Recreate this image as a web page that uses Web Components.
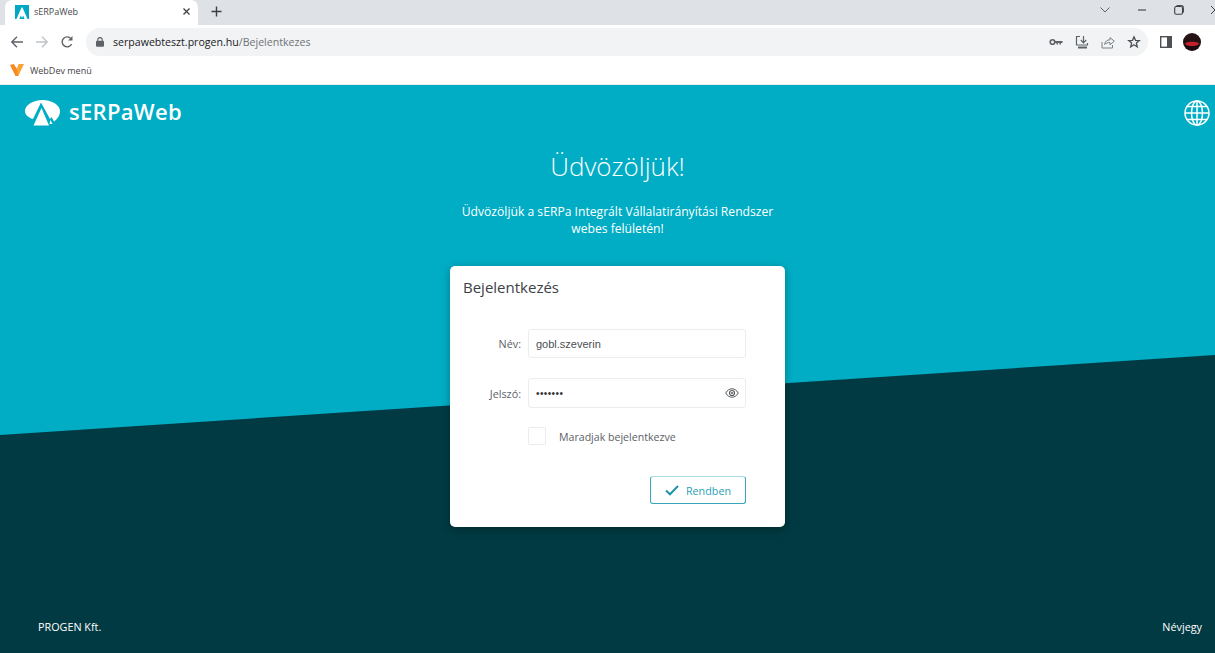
<!DOCTYPE html>
<html lang="hu">
<head>
<meta charset="utf-8">
<title>sERPaWeb</title>
<style>
  html, body { margin: 0; height: 100%; overflow: hidden; }
  body { display: flex; flex-direction: column; font-family: "Open Sans", "Noto Sans", sans-serif; }
</style>
</head>
<body>
<browser-chrome></browser-chrome>
<login-page>
  <page-header slot="header"></page-header>
  <welcome-text slot="welcome"></welcome-text>
  <login-card slot="card"></login-card>
  <span slot="footer-left">PROGEN Kft.</span>
  <span slot="footer-right">Névjegy</span>
</login-page>

<script>
class BaseComponent extends HTMLElement {
  constructor() {
    super();
    this.attachShadow({ mode: 'open' });
  }

  connectedCallback() {
    this.render();
  }

  render(template) {
    this.shadowRoot.innerHTML = template;
  }
}

class BrowserChrome extends BaseComponent {
  render() {
    super.render(`
      <style>
        :host { display: block; height: 85px; flex: none; background: #fff; color: #3c4043; }
        svg { display: block; flex: none; }
        .tabs { display: flex; align-items: flex-end; height: 25px; background: #dee1e6; padding-left: 5px; }
        .tab { display: flex; align-items: center; width: 193px; height: 25px; box-sizing: border-box; padding: 0 7px 2px 10px; background: #fff; border-radius: 7px 7px 0 0; font-size: 9px; }
        .tab span { flex: 1; margin-left: 5px; color: #45494d; }
        .plus { margin: 0 0 8px 13px; }
        .window { display: flex; align-items: center; margin-left: auto; height: 25px; margin-right: -5px; padding-bottom: 5px; box-sizing: border-box; }
        .window svg:nth-child(2) { margin-left: 27px; }
        .window svg:nth-child(3) { margin-left: 27px; }
        .window svg:nth-child(4) { margin-left: 26px; }
        .toolbar { display: flex; align-items: center; height: 34px; padding-left: 10px; }
        .nav { display: flex; gap: 11px; margin-right: 12px; }
        .omni { display: flex; align-items: center; width: 1062px; height: 28px; box-sizing: border-box; padding: 0 7px 0 10px; background: #f1f3f4; border-radius: 14px; font-size: 10.600px; }
        .url { margin-left: 9px; flex: 1; color: #202124; }
        .url i { font-style: normal; color: #6f7378; }
        .omni-icons { display: flex; gap: 12px; }
        .side { margin-left: 12px; }
        .avatar { margin-left: 11px; width: 18px; height: 18px; border-radius: 50%; background: radial-gradient(ellipse 8px 2.500px at 50% 60%, #c2202c 70%, transparent 100%), linear-gradient(#2a1518, #17090b); }
        .bookmarks { display: flex; align-items: center; gap: 6px; height: 26px; box-sizing: border-box; padding: 0 0 3px 10px; font-size: 9px; border-bottom: 1px solid #e8eaed; color: #3f4347; }
      </style>
      <div class="tabs">
        <div class="tab">
          <svg width="14" height="14" viewBox="0 0 14 14"><rect width="14" height="14" fill="#00a9c3"/><path d="M1.500 14 6.500 2.500h1L12.500 14H9.600L8.200 10.500 7 13 5.800 10.500 4.400 14z" fill="#fff"/></svg>
          <span>sERPaWeb</span>
          <svg width="9" height="9" viewBox="0 0 9 9"><path d="M1.500 1.500l6 6M7.500 1.500l-6 6" stroke="#3c4043" stroke-width="1.300"/></svg>
        </div>
        <svg class="plus" width="11" height="11" viewBox="0 0 11 11"><path d="M5.500.5v10M.5 5.500h10" stroke="#3c4043" stroke-width="1.400"/></svg>
        <div class="window">
          <svg width="10" height="6" viewBox="0 0 10 6"><path d="M.5.5 5 5 9.500.5" fill="none" stroke="#5f6368"/></svg>
          <svg width="10" height="10" viewBox="0 0 10 10"><path d="M1 5h8" stroke="#3c4043" stroke-width="1.100"/></svg>
          <svg width="10" height="10" viewBox="0 0 10 10"><rect x=".7" y="1.500" width="7.800" height="7.800" rx="1.500" fill="none" stroke="#3c4043" stroke-width="1.100"/><path d="M2.500.6h5.200a1.600 1.600 0 0 1 1.700 1.700v5.200" fill="none" stroke="#3c4043"/></svg>
          <svg width="10" height="10" viewBox="0 0 10 10"><path d="M1 1l8 8M9 1 1 9" stroke="#3c4043"/></svg>
        </div>
      </div>
      <div class="toolbar">
        <div class="nav">
          <svg width="14" height="14" viewBox="0 0 14 14"><path d="M13 7H2M7 1.800 1.800 7 7 12.200" fill="none" stroke="#5f6368" stroke-width="1.400"/></svg>
          <svg width="14" height="14" viewBox="0 0 14 14"><path d="M1 7h11M7 1.800 12.200 7 7 12.200" fill="none" stroke="#c0c3c7" stroke-width="1.400"/></svg>
          <svg width="14" height="14" viewBox="0 0 14 14"><path d="M11.600 9.200A5 5 0 1 1 11 3.600" fill="none" stroke="#5f6368" stroke-width="1.400"/><path d="M12.500 1v4.400H8.100z" fill="#5f6368"/></svg>
        </div>
        <div class="omni">
          <svg width="8" height="10" viewBox="0 0 8 10"><path d="M1.800 4V2.800a2.200 2.200 0 0 1 4.400 0V4" fill="none" stroke="#5f6368" stroke-width="1.100"/><rect y="3.800" width="8" height="6" rx="1" fill="#5f6368"/></svg>
          <span class="url">serpawebteszt.progen.hu<i>/Bejelentkezes</i></span>
          <div class="omni-icons">
            <svg width="14" height="14" viewBox="0 0 14 14"><circle cx="3.500" cy="7" r="2.300" fill="none" stroke="#5f6368" stroke-width="1.600"/><path d="M5.500 6h8v2H12v1.500h-1.500V8H9v1.500H7.500V8h-2z" fill="#5f6368"/></svg>
            <svg width="14" height="14" viewBox="0 0 14 14"><path d="M5 1.500H1.500v8.500h11V8M8.500 1v6.500M5.800 5 8.500 7.800 11.200 5" fill="none" stroke="#5f6368" stroke-width="1.200"/><rect x="3" y="11.500" width="9" height="2" fill="#5f6368"/></svg>
            <svg width="14" height="14" viewBox="0 0 14 14"><path d="M1 7v6h10.500V10M3.500 9.500C4 6.500 6 4.800 9 4.800V2.500l4.300 3.700L9 9.800V7.500c-2.200 0-4 .6-5.500 2z" fill="none" stroke="#7d8185" stroke-width="1"/></svg>
            <svg width="14" height="14" viewBox="0 0 14 14"><path d="M7 1.800 8.500 5.300l3.800.3-2.900 2.500.9 3.700L7 9.800l-3.300 2 .9-3.700-2.900-2.500 3.800-.3z" fill="none" stroke="#4d5155" stroke-width="1.300"/></svg>
          </div>
        </div>
        <svg class="side" width="12" height="12" viewBox="0 0 12 12"><rect x=".7" y=".7" width="10.600" height="10.600" fill="none" stroke="#4d5155" stroke-width="1.400"/><rect x="7" y="1" width="4" height="10" fill="#4d5155"/></svg>
        <div class="avatar"></div>
      </div>
      <div class="bookmarks">
        <svg width="14" height="14" viewBox="0 0 14 14"><path d="M0 2 3.800 1 7 6 8.800 1h5L8 13H5.500z" fill="#f58a1f"/><path d="M7 6 8.800 1h5L8 13z" fill="#f9a535"/></svg>
        <span>WebDev menü</span>
      </div>
    `);
  }
}

class PageHeader extends BaseComponent {
  render() {
    super.render(`
      <style>
        :host { display: flex; align-items: center; justify-content: space-between; height: 54px; box-sizing: border-box; padding: 2px 5px 0 25px; color: #fff; }
        .logo { display: flex; align-items: center; gap: 9px; font-size: 22px; font-weight: 600; letter-spacing: .3px; }
        .logo span { margin-bottom: 4px; }
        svg { display: block; }
      </style>
      <div class="logo">
        <svg width="35" height="26" viewBox="0 0 35 26" fill="#fff">
          <path d="M8 19C3.500 17.500 0 15 0 11 0 5 8 0 17.500 0S35 5 35 11c0 4.500-2.500 8-6 10.500L26.500 17 25 19 16 2.500z"/>
          <path d="M16.500 8 24 25.500H8.500z"/>
          <path d="M25.500 20 27.500 24 24.500 24z"/>
        </svg>
        <span>sERPaWeb</span>
      </div>
      <svg width="26" height="26" viewBox="0 0 26 26" fill="none" stroke="#fff" stroke-width="1.500">
        <circle cx="13" cy="13" r="12"/>
        <ellipse cx="13" cy="13" rx="5.500" ry="12"/>
        <path d="M13 1v24M1 13h24M3 6.500h20M3 19.500h20"/>
      </svg>
    `);
  }
}

class WelcomeText extends BaseComponent {
  render() {
    super.render(`
      <style>
        :host { display: block; text-align: center; color: #fff; }
        h1 { margin: 0; font-size: 26px; font-weight: 300; line-height: 38px; }
        p { margin: 18px 0 0; font-size: 12.150px; line-height: 17px; }
      </style>
      <h1>Üdvözöljük!</h1>
      <p>Üdvözöljük a sERPa Integrált Vállalatirányítási Rendszer<br>webes felületén!</p>
    `);
  }
}

class FormField extends BaseComponent {
  render() {
    const label = this.getAttribute('label');
    const value = this.getAttribute('value');
    const secret = this.hasAttribute('secret');
    super.render(`
      <style>
        :host { display: flex; align-items: center; color: #4a4f54; font-size: 10.800px; }
        label { width: 58px; margin-right: 7px; text-align: right; color: #5c6166; }
        .box { display: flex; align-items: center; justify-content: space-between; width: 218px; height: var(--field-height, 29px); box-sizing: border-box; padding: 0 6px 0 7px; border: 1px solid #ececec; border-radius: 3px; background: #fff; font-family: "Liberation Sans", sans-serif; font-size: 11px; }
        .dots { font-size: 10px; letter-spacing: .4px; color: #333; }
        svg { display: block; }
      </style>
      <label>${label}</label>
      <div class="box">
        <span class="${secret ? 'dots' : ''}">${value}</span>
        ${secret ? `<svg width="14" height="10" viewBox="0 0 14 10" fill="none" stroke="#55595d"><path d="M.7 5C2.500 2 4.500.8 7 .8S11.500 2 13.300 5C11.500 8 9.500 9.200 7 9.200S2.500 8 .7 5z"/><circle cx="7" cy="5" r="2.500" stroke-width="1.200"/><circle cx="7" cy="5" r="1" fill="#55595d" stroke="none"/></svg>` : ''}
      </div>
    `);
  }
}

class LoginCard extends BaseComponent {
  render() {
    super.render(`
      <style>
        :host { display: block; width: 335px; height: 261px; box-sizing: border-box; padding: 10px 39px 0 13px; background: #fff; border-radius: 5px; box-shadow: 0 2px 8px rgba(0, 0, 0, .3); color: #45494e; }
        h2 { margin: 0; font-size: 15px; font-weight: 400; line-height: 22px; color: #3c4146; }
        .name { margin-top: 31px; }
        .password { margin-top: 20px; --field-height: 30px; }
        .keep { display: flex; align-items: center; margin: 19px 0 0 65px; font-size: 10.600px; color: #5c6166; }
        .keep span { padding-top: 2px; }
        .check { width: 18px; height: 18px; box-sizing: border-box; margin-right: 13px; border: 1px solid #ececec; border-radius: 2px; }
        .actions { display: flex; justify-content: flex-end; margin-top: 31px; }
        button { display: flex; align-items: center; justify-content: center; gap: 7px; width: 96px; height: 28px; padding: 0; border: 1px solid #35a5ba; border-top-color: #a9dde6; border-radius: 3px; background: #fff; color: #2b9fb5; font: inherit; font-size: 10.800px; }
        svg { display: block; }
      </style>
      <h2>Bejelentkezés</h2>
      <form-field class="name" label="Név:" value="gobl.szeverin"></form-field>
      <form-field class="password" label="Jelszó:" value="•••••••" secret></form-field>
      <div class="keep"><div class="check"></div><span>Maradjak bejelentkezve</span></div>
      <div class="actions">
        <button type="button">
          <svg width="14" height="11" viewBox="0 0 14 11"><path d="M1 5.500 5 9.300 13 1" fill="none" stroke="#1f93ab" stroke-width="2"/></svg>
          Rendben
        </button>
      </div>
    `);
  }
}

class LoginPage extends BaseComponent {
  render() {
    super.render(`
      <style>
        :host { display: flex; flex-direction: column; flex: 1; position: relative; overflow: hidden; background: #013a42; color: #fff; font-size: 10.800px; }
        .sky { position: absolute; inset: 0; background: #00adc5; clip-path: polygon(0 0, 100% 0, 100% 270px, 0 350px); }
        .content { position: relative; display: flex; flex-direction: column; flex: 1; }
        .center { display: flex; flex-direction: column; align-items: center; padding-left: 20px; }
        .welcome { margin-top: 8px; }
        .card { margin-top: 29px; }
        footer { display: flex; justify-content: space-between; margin-top: auto; height: 34px; padding: 0 13px 0 38px; }
      </style>
      <div class="sky"></div>
      <div class="content">
        <slot name="header"></slot>
        <div class="center">
          <div class="welcome"><slot name="welcome"></slot></div>
          <div class="card"><slot name="card"></slot></div>
        </div>
        <footer>
          <slot name="footer-left"></slot>
          <slot name="footer-right"></slot>
        </footer>
      </div>
    `);
  }
}

customElements.define('browser-chrome', BrowserChrome);
customElements.define('page-header', PageHeader);
customElements.define('welcome-text', WelcomeText);
customElements.define('form-field', FormField);
customElements.define('login-card', LoginCard);
customElements.define('login-page', LoginPage);
</script>
</body>
</html>
